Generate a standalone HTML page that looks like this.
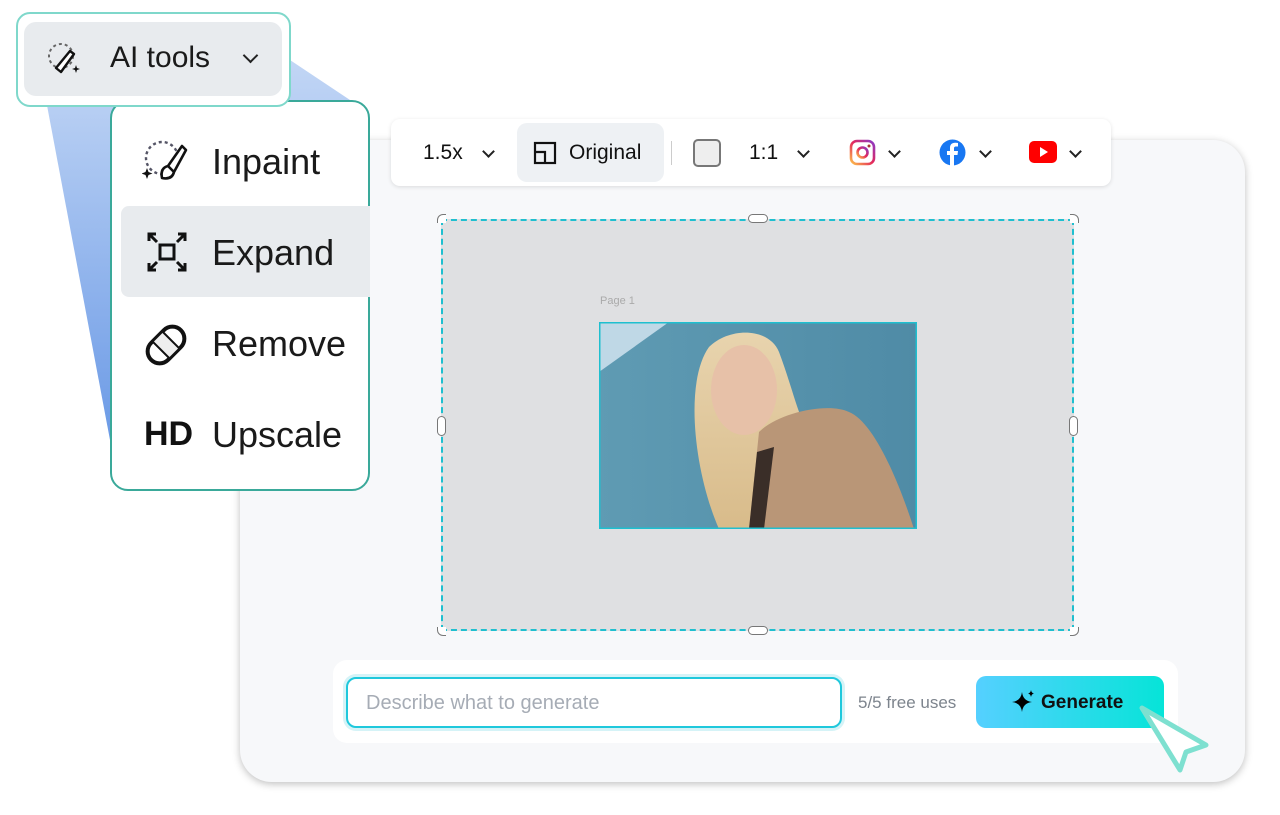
<!DOCTYPE html>
<html><head><style>
*{margin:0;padding:0;box-sizing:border-box}
body{width:1280px;height:815px;background:#fff;position:relative;overflow:hidden;font-family:"Liberation Sans",sans-serif;color:#111}
.abs{position:absolute}
.card{left:240px;top:140px;width:1005px;height:642px;background:#f7f8fa;border-radius:32px;box-shadow:0 2px 8px rgba(0,0,0,.25)}
.tb{left:391px;top:119px;width:720px;height:67px;background:#fff;border-radius:9px;box-shadow:0 1px 4px rgba(0,0,0,.12)}
.tb span{position:absolute;font-size:21px;top:22px}
.chev{position:absolute;width:9px;height:9px;border-right:2.2px solid #222;border-bottom:2.2px solid #222;transform:rotate(45deg)}
.canvas{left:441px;top:219px;width:633px;height:412px;background:#dfe0e2;border:2px dashed #1fbfcf}
.h{position:absolute;background:#fff;border:1.5px solid #777;border-radius:5px}
.menu{left:110px;top:100px;width:260px;height:391px;background:#fff;border:2px solid #3aa99a;border-radius:18px}
.menu .it{position:absolute;left:100px;font-size:36px;color:#1a1a1a}
</style></head><body>
<svg class="abs" style="left:0;top:0" width="400" height="500"><defs><linearGradient id="bg" x1="0" y1="0" x2="0" y2="1"><stop offset="0" stop-color="#c2d6f5"/><stop offset="1" stop-color="#6b9ae6"/></linearGradient></defs><polygon points="46,100 290,60 350,100 110,440" fill="url(#bg)"/></svg>
<div class="abs card"></div>
<div class="abs tb">
<span style="left:32px">1.5x</span><div class="chev" style="left:93px;top:28px"></div>
<div style="position:absolute;left:126px;top:4px;width:147px;height:59px;background:#eef1f4;border-radius:10px"></div>
<svg style="position:absolute;left:142px;top:22px" width="24" height="24"><rect x="2" y="2" width="20" height="20" fill="none" stroke="#111" stroke-width="2.2"/><path d="M2 11H12V22" fill="none" stroke="#111" stroke-width="2.2"/></svg>
<span style="left:178px">Original</span>
<div style="position:absolute;left:280px;top:22px;width:1px;height:24px;background:#ccc"></div>
<div style="position:absolute;left:302px;top:20px;width:28px;height:28px;border:2px solid #777;border-radius:5px;background:#eee"></div>
<span style="left:358px">1:1</span><div class="chev" style="left:408px;top:28px"></div>
<svg style="position:absolute;left:458px;top:20px" width="27" height="27"><defs><linearGradient id="ig" x1="0" y1="1" x2="1" y2="0"><stop offset="0" stop-color="#fdc14a"/><stop offset=".5" stop-color="#e4285b"/><stop offset="1" stop-color="#8a3ac8"/></linearGradient></defs><rect x="2" y="2" width="23" height="23" rx="6" fill="none" stroke="url(#ig)" stroke-width="2.6"/><circle cx="13.5" cy="13.5" r="5" fill="none" stroke="url(#ig)" stroke-width="2.6"/><circle cx="20" cy="7" r="1.5" fill="#a33"/></svg>
<div class="chev" style="left:499px;top:28px"></div>
<svg style="position:absolute;left:548px;top:20px" width="27" height="27"><circle cx="13.5" cy="13.5" r="13" fill="#1877f2"/><path d="M15 27V16h3.5l.5-4h-4V9.5c0-1.2.4-2 2-2h2V4c-.4 0-1.6-.2-3-.2-3 0-5 1.8-5 5V12H8v4h3v11z" fill="#fff"/></svg>
<div class="chev" style="left:590px;top:28px"></div>
<svg style="position:absolute;left:638px;top:22px" width="28" height="22"><rect width="28" height="22" rx="5" fill="#f00"/><path d="M11 6l8 5-8 5z" fill="#fff"/></svg>
<div class="chev" style="left:680px;top:28px"></div>
</div>
<div class="abs canvas"></div>
<div class="h" style="left:437px;top:214px;width:18px;height:18px;border-radius:6px;clip-path:inset(0 50% 50% 0)"></div>
<div class="h" style="left:1061px;top:214px;width:18px;height:18px;border-radius:6px;clip-path:inset(0 0 50% 50%)"></div>
<div class="h" style="left:437px;top:618px;width:18px;height:18px;border-radius:6px;clip-path:inset(50% 50% 0 0)"></div>
<div class="h" style="left:1061px;top:618px;width:18px;height:18px;border-radius:6px;clip-path:inset(50% 0 0 50%)"></div>
<div class="h" style="left:748px;top:214px;width:20px;height:9px"></div>
<div class="h" style="left:748px;top:626px;width:20px;height:9px"></div>
<div class="h" style="left:437px;top:416px;width:9px;height:20px"></div>
<div class="h" style="left:1069px;top:416px;width:9px;height:20px"></div>
<div class="abs" style="left:600px;top:295px;font-size:11px;color:#aaa">Page 1</div>
<svg class="abs" style="left:599px;top:322px" width="318" height="207">
<defs><linearGradient id="wall" x1="0" y1="0" x2="1" y2="0"><stop offset="0" stop-color="#5f9bb3"/><stop offset="1" stop-color="#4f8ba6"/></linearGradient>
<linearGradient id="hair" x1="0" y1="0" x2="0" y2="1"><stop offset="0" stop-color="#e8d4ae"/><stop offset="1" stop-color="#d8bb8a"/></linearGradient></defs>
<rect width="318" height="207" fill="url(#wall)"/>
<polygon points="0,0 70,0 0,50" fill="#bfd8e6"/>
<path d="M120 207 C95 150 85 60 110 25 C130 5 170 5 180 30 C195 70 200 100 215 120 L180 207Z" fill="url(#hair)"/>
<ellipse cx="145" cy="68" rx="33" ry="45" fill="#e7c1a8"/>
<path d="M150 207 L160 110 C180 90 230 80 250 90 C275 100 300 160 315 207Z" fill="#b99677"/>
<path d="M150 207 L158 130 L175 125 L165 207Z" fill="#3a2e28"/>
<rect x="0" y="0" width="318" height="207" fill="none" stroke="#1fbfcf" stroke-width="3"/>
</svg>
<div class="abs" style="left:333px;top:660px;width:845px;height:83px;background:#fff;border-radius:14px"></div>
<div class="abs" style="left:346px;top:677px;width:496px;height:51px;border:2px solid #1fc8dc;border-radius:10px;box-shadow:0 0 0 3px #d5f3f7;background:#fff;font-size:20px;color:#a6acb5;padding:13px 18px">Describe what to generate</div>
<div class="abs" style="left:858px;top:693px;font-size:17px;color:#7d848d">5/5 free uses</div>
<div class="abs" style="left:976px;top:676px;width:188px;height:52px;border-radius:10px;background:linear-gradient(90deg,#55d0ff,#06e4d8);font-size:19px;font-weight:bold;padding:16px 0 0 65px">Generate</div>
<svg class="abs" style="left:1012px;top:690px" width="24" height="24"><path d="M10 2 Q11 11 20 12 Q11 13 10 22 Q9 13 0 12 Q9 11 10 2Z" fill="#000"/><path d="M19 0 Q19.5 3 22 3.5 Q19.5 4 19 7 Q18.5 4 16 3.5 Q18.5 3 19 0Z" fill="#000"/></svg>
<svg class="abs" style="left:1130px;top:700px" width="90" height="80"><path d="M12 8 L76 45 L56 52 L50 70 Z" fill="#fff" stroke="#7ee0d0" stroke-width="5" stroke-linejoin="round"/></svg>
<div class="abs menu">
<div style="position:absolute;left:9px;top:104px;width:249px;height:91px;background:#e8ebee;border-radius:8px 0 0 8px"></div>
<svg style="position:absolute;left:30px;top:36px" width="50" height="50"><circle cx="20" cy="20" r="16" fill="none" stroke="#556" stroke-width="2.4" stroke-dasharray="3 3"/><path d="M26 28 L40 8 L44 12 L32 34 Z M26 28 Q18 30 20 40 Q30 42 32 34" fill="#fff" stroke="#111" stroke-width="2.6" stroke-linejoin="round"/><path d="M5 30 l1.5 4 4 1.5 -4 1.5 -1.5 4 -1.5 -4 -4 -1.5 4 -1.5z" fill="#111"/></svg>
<div class="it" style="top:39px">Inpaint</div>
<svg style="position:absolute;left:35px;top:130px" width="40" height="40"><path d="M2 9V2h7M31 2h7v7M38 31v7h-7M9 38H2v-7M3 3l7 7M37 3l-7 7M37 37l-7-7M3 37l7-7" fill="none" stroke="#111" stroke-width="3"/><rect x="13" y="13" width="14" height="14" fill="none" stroke="#111" stroke-width="3"/></svg>
<div class="it" style="top:130px">Expand</div>
<svg style="position:absolute;left:31px;top:220px" width="46" height="46"><g transform="rotate(-45 23 23)"><rect x="2" y="11" width="42" height="24" rx="12" fill="none" stroke="#111" stroke-width="4"/><rect x="16" y="11" width="14" height="24" fill="#eee" stroke="#111" stroke-width="2"/></g></svg>
<div class="it" style="top:221px">Remove</div>
<div style="position:absolute;left:32px;top:313px;font-size:34px;font-weight:bold">HD</div>
<div class="it" style="top:312px">Upscale</div>
</div>
<div class="abs" style="left:16px;top:12px;width:275px;height:95px;background:#fff;border:2px solid #7fd8cb;border-radius:14px"></div>
<div class="abs" style="left:24px;top:22px;width:258px;height:74px;background:#e8ebee;border-radius:12px"></div>
<svg class="abs" style="left:46px;top:41px" width="36" height="36"><circle cx="15" cy="15" r="12" fill="none" stroke="#666" stroke-width="2" stroke-dasharray="3 3"/><path d="M10 27 L24 10 L28 13 L15 31 Z" fill="#fff" stroke="#111" stroke-width="2.4" stroke-linejoin="round"/><path d="M30 24 l1 3 3 1 -3 1 -1 3 -1 -3 -3 -1 3 -1z" fill="#111"/></svg>
<div class="abs" style="left:110px;top:41px;font-size:30px;color:#1a1a1a">AI tools</div>
<div class="chev" style="left:245px;top:50px;width:11px;height:11px;border-width:2px"></div>
</body></html>
